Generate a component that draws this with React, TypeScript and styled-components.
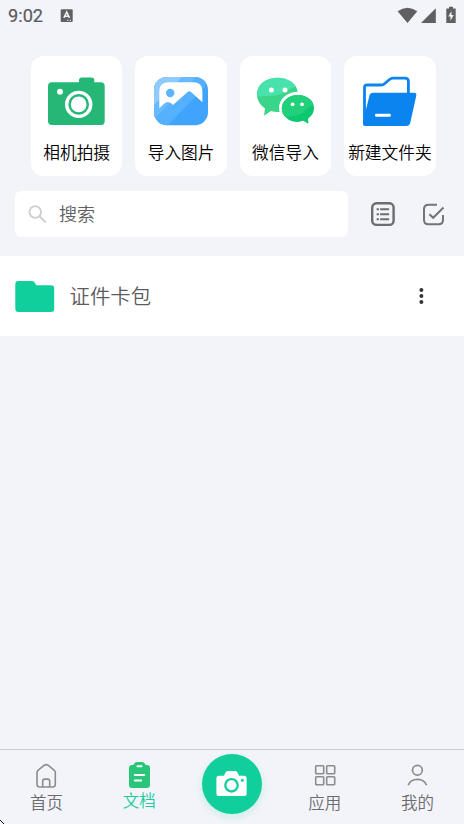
import React from "react";
import styled, { createGlobalStyle } from "styled-components";

const Global = createGlobalStyle`
  * { box-sizing: border-box; }
  body { margin: 0; background: #f3f4fa; font-family: "Noto Sans CJK SC", sans-serif; font-weight: 350; overflow: hidden; }
`;

const Screen = styled.div`
  width: 464px;
  height: 824px;
  display: flex;
  flex-direction: column;
  background: #f3f4fa;
`;

const Svg = styled.svg`
  display: block;
  flex: none;
  overflow: visible;
`;

const StatusBar = styled.header`
  height: 32px;
  display: flex;
  align-items: center;
  padding: 0 6px 0 8px;
  color: #5c5c5e;
`;

const Clock = styled.span`
  font: 400 18.2px/32px Roboto, sans-serif;
  -webkit-text-stroke: 0.2px currentColor;
  width: 52px;
`;

const StatusIcons = styled.div`
  margin-left: auto;
  display: flex;
`;

const Actions = styled.section`
  padding: 24px 28px 0 31px;
  display: flex;
  gap: 13px;
`;

const ActionCard = styled.button`
  width: 91.4px;
  height: 119.5px;
  padding: 20px 0 0;
  border: 0;
  border-radius: 13px;
  background: #fff;
  display: flex;
  flex-direction: column;
  align-items: center;
  font-family: inherit;
  font-weight: inherit;
`;

const ActionArt = styled.div`
  height: 64px;
`;

const ActionLabel = styled.span`
  font-size: 16.7px;
  line-height: 24px;
  color: #000;
  white-space: nowrap;
`;

const Tools = styled.section`
  padding: 15.5px 19px 19px 15px;
  display: flex;
  align-items: center;
`;

const SearchBox = styled.div`
  width: 333px;
  height: 46px;
  padding-left: 13px;
  border-radius: 6px;
  background: #fff;
  display: flex;
  align-items: center;
  gap: 13px;
  font-size: 18px;
  color: #606062;
  margin-right: 23px;
`;

const SearchHint = styled.span`
  line-height: 26px;
  padding-bottom: 2px;
`;

const ToolGap = styled.div`
  width: 28px;
`;

const Row = styled.main`
  height: 80px;
  padding: 0 37px 0 15px;
  background: #fff;
  display: flex;
  align-items: center;
`;

const RowTitle = styled.span`
  margin-left: 15.5px;
  padding-bottom: 3px;
  flex: 1;
  font-size: 20.4px;
  line-height: 30px;
  color: #5c5c5c;
`;

const TabBar = styled.nav`
  margin-top: auto;
  height: 75px;
  border-top: 1px solid #c9cad0;
  display: grid;
  grid-template-columns: repeat(5, 1fr);
`;

const Tab = styled.div<{ $active?: boolean }>`
  display: flex;
  flex-direction: column;
  align-items: center;
  padding-top: ${(p) => (p.$active ? 12 : 14)}px;
  color: ${(p) => (p.$active ? "#16cc98" : "#6c6c6e")};
  font-size: 16.5px;
  line-height: 24px;
  gap: ${(p) => (p.$active ? 0 : 1)}px;
`;

const Shutter = styled.button`
  width: 60.5px;
  height: 60.5px;
  margin: 3.5px auto 0;
  padding: 0;
  border: 0;
  border-radius: 50%;
  background: #11cf9d;
  box-shadow: 0 3px 8px rgba(17, 207, 157, 0.18);
  display: flex;
  align-items: center;
  justify-content: center;
`;

const CornerMark = styled.div`
  position: absolute;
  left: 0;
  top: 820px;
`;

const CameraArt = () => (
  <Svg width="57" height="49" viewBox="0 0 57 49">
    <path fill="#25b776" d="M4 6.3H31V4.3Q31 1.6 34 1.6H43.5Q46.3 1.6 46.3 4.3V6.3H53Q56.7 6.3 56.7 10.3V45Q56.7 49 53 49H4Q0 49 0 45V10.3Q0 6.3 4 6.3Z" />
    <circle cx="12" cy="15.7" r="3" fill="#fff" />
    <circle cx="30.7" cy="28.4" r="13.7" fill="#fff" />
    <circle cx="30.7" cy="28.4" r="9.1" fill="#fff" stroke="#25b776" strokeWidth="2.5" />
  </Svg>
);

const PictureArt = () => (
  <Svg width="54" height="49" viewBox="0 0 54 49">
    <defs>
      <clipPath id="pictureFrame">
        <rect y="1" width="54" height="48.2" rx="13" />
      </clipPath>
    </defs>
    <g clipPath="url(#pictureFrame)">
      <rect width="54" height="50" fill="#40a3fc" />
      <path fill="#55b0fd" d="M0 0H54L51 11L13 50H0Z" />
      <path fill="#68b9fe" d="M0 0H43L0 43Z" />
      <path fill="#8fcaff" d="M0 0H29L0 29Z" />
    </g>
    <path fill="#fff" d="M15 6.3H39Q48.4 6.3 48.4 15V26.3L37 16Q35.3 14.5 33.6 16L19 29L17.5 27.6Q13.5 24.2 9.5 28.2L5.3 32.2V15Q5.3 6.3 15 6.3Z" />
    <circle cx="16.2" cy="17" r="4.2" fill="#5db4fd" />
  </Svg>
);

const ChatArt = () => (
  <Svg width="57" height="49" viewBox="0 0 57 49">
    <defs>
      <clipPath id="backBubble">
        <path d="M20.5 1.8C32 1.8 41 8.5 41 18.5S32 36 20.5 36Q17 36 14 35L7 39.7L8 32.5C3 29 0 24 0 18.5C0 8.5 9 1.8 20.5 1.8Z" />
      </clipPath>
      <clipPath id="frontBubble">
        <path d="M40.8 19C50 19 57 24.5 57 32Q57 38.5 51 42.7L51.5 47.8L46 44.8Q43.5 45.9 40.8 45.9C31.8 45.9 24.8 39.7 24.8 32.4S31.8 19 40.8 19Z" />
      </clipPath>
    </defs>
    <g clipPath="url(#backBubble)">
      <rect width="45" height="42" fill="#3bd58a" />
      <path fill="#49e2ad" d="M0 0H43V9Q33 12 26 17Q17 21 0 20Z" />
      <ellipse cx="40.8" cy="32" rx="18.8" ry="16.2" fill="#fff" />
    </g>
    <g clipPath="url(#frontBubble)">
      <rect x="24" y="17" width="34" height="32" fill="#0dc86e" />
      <path fill="#21d07b" d="M23 17H58V28Q50 32 47 36Q41 41 24 41Z" />
    </g>
    <g fill="#fff">
      <circle cx="14.4" cy="14" r="2.5" />
      <circle cx="28" cy="14" r="2.5" />
      <circle cx="35.6" cy="28.3" r="1.9" />
      <circle cx="45" cy="28.3" r="1.9" />
    </g>
  </Svg>
);

const FolderArt = () => (
  <Svg width="54" height="51" viewBox="0 0 54 51">
    <path fill="none" stroke="#0b84f0" strokeWidth="2.8" d="M1.5 46V11.5Q1.5 9 4 9H18Q20 9 21.5 7.7L26.5 3.5Q28 2.2 30 2.2H42Q45.4 2.2 45.4 5.6V18" />
    <path fill="#0b84f0" d="M10 16.7H51Q54 16.7 53.2 20L47.2 47Q46.5 50 43 50H2Q0 50 0 48V45L6.5 19.5Q7.2 16.7 10 16.7Z" />
    <rect x="12" y="37.7" width="15.8" height="3" rx="1.2" fill="#fff" />
  </Svg>
);

const actions = [
  { label: "相机拍摄", art: <CameraArt /> },
  { label: "导入图片", art: <PictureArt /> },
  { label: "微信导入", art: <ChatArt /> },
  { label: "新建文件夹", art: <FolderArt /> },
];

export default function App() {
  return (
    <Screen>
      <Global />
      <StatusBar>
        <Clock>9:02</Clock>
        <Svg width="13" height="14" viewBox="0 0 13 14">
          <rect x="0.7" y="0.2" width="12" height="12.8" rx="1" fill="#606062" />
          <path d="M3.9 8.8L6.7 3L9.5 8.8M5 7.2H8.4" fill="none" stroke="#f3f4fa" strokeWidth="1.5" />
          <path d="M7 11.3h1.3M9.7 11.3h1.3" stroke="#f3f4fa" />
        </Svg>
        <StatusIcons>
          <Svg width="60" height="18" viewBox="0 0 60 18" fill="#606062">
            <path d="M-.4 4.3Q9.5-3 19.3 4.3L9.5 16Z" />
            <path d="M37.8 1.3V16H23Z" />
            <path d="M48.3 1.5H51V-.3H55V1.5H57.7V16H48.3Z" />
            <path fill="#f3f4fa" d="M53.5 4L50.3 9.5H52.5V13.8L55.7 8.1H53.5Z" />
          </Svg>
        </StatusIcons>
      </StatusBar>

      <Actions>
        {actions.map((a) => (
          <ActionCard key={a.label}>
            <ActionArt>{a.art}</ActionArt>
            <ActionLabel>{a.label}</ActionLabel>
          </ActionCard>
        ))}
      </Actions>

      <Tools>
        <SearchBox>
          <Svg width="18" height="18" viewBox="0 0 18 18" fill="none" stroke="#d0d0d0" strokeWidth="2">
            <circle cx="7.3" cy="7" r="5.8" />
            <path d="M11.5 11.2L17.8 17.5" />
          </Svg>
          <SearchHint>搜索</SearchHint>
        </SearchBox>
        <Svg width="24" height="24" viewBox="0 0 24 24" fill="none" stroke="#6d6d6f" strokeWidth="2.1">
          <rect x="1.2" y="1.3" width="21.4" height="21.6" rx="4.2" strokeWidth="2.4" />
          <path d="M5.6 7.2h2.3M5.6 12.2h2.3M5.6 17.2h2.3M9.1 7.2h9M9.1 12.2h9M9.1 17.2h9" />
        </Svg>
        <ToolGap />
        <Svg width="22" height="22" viewBox="0 0 22 22" fill="none" stroke="#747476" strokeWidth="2">
          <path d="M14 1.7H5.5Q1 1.7 1 6.2V16.7Q1 21.2 5.5 21.2H15.5Q20 21.2 20 16.7V12M6.4 11.2L10.2 14.8L20.5 4.5" />
        </Svg>
      </Tools>

      <Row>
        <Svg width="39" height="31" viewBox="0 0 39 31">
          <path fill="#11cf9d" d="M3.3 0H17Q19 0 20 2L21.3 4.3H36Q39.2 4.3 39.2 7.3V28Q39.2 31 36 31H3.3Q.3 31 .3 28V3Q.3 0 3.3 0Z" />
        </Svg>
        <RowTitle>证件卡包</RowTitle>
        <Svg width="12" height="18" viewBox="0 0 12 18" fill="#333">
          <circle cx="6.4" cy="3" r="2" />
          <circle cx="6.4" cy="9" r="2" />
          <circle cx="6.4" cy="15" r="2" />
        </Svg>
      </Row>

      <TabBar>
        <Tab>
          <Svg width="20" height="25" viewBox="0 0 20 25" fill="none" stroke="#8c8c8e" strokeWidth="1.6">
            <path d="M1 8.4Q1 7.2 2 6.4L8.3 1.2Q10.2 0 12 1.2L18.3 6.4Q19.3 7.2 19.3 8.4V20.3Q19.3 23 16.6 23H3.7Q1 23 1 20.3Z" />
            <path d="M6.7 23V17.3Q6.7 15.1 8.7 15.1H11.7Q13.7 15.1 13.7 17.3V23" />
          </Svg>
          首页
        </Tab>
        <Tab $active>
          <Svg width="21" height="26" viewBox="0 0 21 26">
            <path fill="#29c67a" d="M3 3H4.3Q5.5 0 8 0H13Q15.5 0 16.7 3H18Q21 3 21 6V23Q21 26 18 26H3Q0 26 0 23V6Q0 3 3 3Z" />
            <path d="M8.5 4.2h4M5.8 13h9.4M5.8 18.4h6.4" stroke="#fff" strokeWidth="2" strokeLinecap="round" />
          </Svg>
          文档
        </Tab>
        <Shutter>
          <Svg width="31" height="26" viewBox="0 0 31 26">
            <path fill="#fff" d="M3 4.8H8L9.5 1.5Q10.2 0 12 0H19Q20.8 0 21.5 1.5L23 4.8H28Q30.6 4.8 30.6 7.4V22.4Q30.6 25 28 25H3Q.4 25 .4 22.4V7.4Q.4 4.8 3 4.8Z" />
            <circle cx="15.5" cy="14.3" r="6.2" fill="none" stroke="#11cf9d" strokeWidth="2.3" />
            <circle cx="26.4" cy="9.3" r="1.5" fill="#11cf9d" />
          </Svg>
        </Shutter>
        <Tab>
          <Svg width="21" height="25" viewBox="0 0 21 25" fill="none" stroke="#8c8c8e" strokeWidth="1.6">
            <rect x="1.7" y="1.8" width="8" height="8" rx="0.8" />
            <rect x="12.7" y="1.8" width="8" height="8" rx="0.8" />
            <rect x="1.7" y="12.8" width="8" height="8" rx="0.8" />
            <rect x="12.7" y="12.8" width="8" height="8" rx="0.8" />
          </Svg>
          应用
        </Tab>
        <Tab>
          <Svg width="20" height="25" viewBox="0 0 20 25" fill="none" stroke="#8c8c8e" strokeWidth="1.7">
            <circle cx="9.4" cy="6.3" r="4.9" />
            <path d="M.2 21.3Q2.4 15.3 9.4 15.3T18.6 21.3" />
          </Svg>
          我的
        </Tab>
      </TabBar>
      <CornerMark>
        <Svg width="4" height="4" viewBox="0 0 4 4">
          <path d="M0 0H1V1H2V2H3V3H4V4H3V3H2V2H1V1H0Z" fill="#111" />
        </Svg>
      </CornerMark>
    </Screen>
  );
}
